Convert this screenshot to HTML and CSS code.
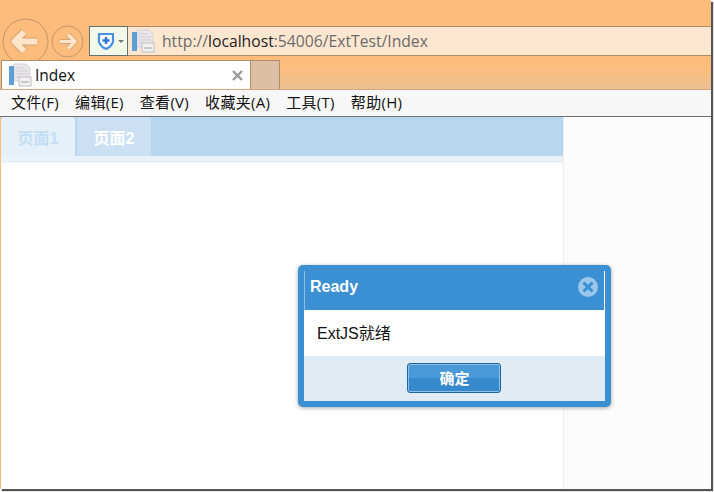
FILE: index.html
```html
<!DOCTYPE html>
<html lang="zh">
<head>
<meta charset="utf-8">
<title>Index</title>
<link rel="stylesheet" href="styles.css">
</head>
<body>
<div class="window">
  <header class="chrome">
    <div class="navrow">
      <svg class="back" width="47" height="47" viewBox="0 0 47 47">
        <circle cx="23.500" cy="23.500" r="22.500" fill="#fcbd7c" stroke="#c2946a"/>
        <path d="M22 14 L12.500 23.500 L22 33 M14 23.500 H35" fill="none" stroke="#b58d68" stroke-width="8" stroke-linejoin="round" stroke-linecap="butt" opacity=".55"/>
        <path d="M22 14 L12.500 23.500 L22 33 M14 23.500 H35" fill="none" stroke="#fde4cb" stroke-width="6" stroke-linejoin="round" stroke-linecap="butt"/>
      </svg>
      <svg class="forward" width="33" height="33" viewBox="0 0 33 33">
        <circle cx="16.500" cy="16.500" r="15.500" fill="#fcbd7c" stroke="#c2946a"/>
        <path d="M17 9.500 L24 16.500 L17 23.500 M23 16.500 H9" fill="none" stroke="#b58d68" stroke-width="5" stroke-linejoin="round" opacity=".55"/>
        <path d="M17 9.500 L24 16.500 L17 23.500 M23 16.500 H9" fill="none" stroke="#fde4cb" stroke-width="3.200" stroke-linejoin="round"/>
      </svg>
      <div class="address">
        <div class="shield">
          <svg width="18" height="18" viewBox="0 0 18 18">
            <path d="M2 2 H16 V10 Q14 15 9 17 Q4 15 2 10 Z" fill="#fff" stroke="#4a90e2" stroke-width="2.200" stroke-linejoin="round"/>
            <path d="M9 5 V12 M5.500 8.500 H12.500" stroke="#2a76d2" stroke-width="2.400"/>
          </svg>
          <span class="caret"></span>
        </div>
        <div class="url-box">
          <svg class="page-icon" width="24" height="24" viewBox="0 0 24 24">
            <path d="M6 1 H18 L22 5 V18 H6 Z" fill="#e8e6e8" stroke="#d4d2d4"/>
            <path d="M8 5 H16 M8 8 H20 M8 11 H20 M8 14 H12" stroke="#cfcdd0"/>
            <rect x="1" y="3" width="5" height="19" fill="#5b9fd6"/>
            <rect x="11" y="14" width="12" height="9" fill="#f2f2f2" stroke="#bdbdbd"/>
            <rect x="13" y="18" width="8" height="2" fill="#c8c8c8"/>
          </svg>
          <span class="url">http://<b class="host">localhost</b>:54006/ExtTest/Index</span>
        </div>
      </div>
    </div>
    <div class="tabrow">
      <div class="tab">
        <svg class="page-icon" width="24" height="24" viewBox="0 0 24 24">
          <path d="M6 1 H18 L22 5 V18 H6 Z" fill="#e8e6e8" stroke="#d4d2d4"/>
          <path d="M8 5 H16 M8 8 H20 M8 11 H20 M8 14 H12" stroke="#cfcdd0"/>
          <rect x="1" y="3" width="5" height="19" fill="#5b9fd6"/>
          <rect x="11" y="14" width="12" height="9" fill="#f2f2f2" stroke="#bdbdbd"/>
          <rect x="13" y="18" width="8" height="2" fill="#c8c8c8"/>
        </svg>
        <span class="tab-title">Index</span>
        <svg class="tab-close" width="11" height="11" viewBox="0 0 11 11">
          <path d="M1 1 L10 10 M10 1 L1 10" stroke="#9a9a9a" stroke-width="2.400"/>
        </svg>
      </div>
      <div class="newtab"></div>
    </div>
  </header>
  <nav class="menubar">
    <span>文件(F)</span><span>编辑(E)</span><span>查看(V)</span><span>收藏夹(A)</span><span>工具(T)</span><span>帮助(H)</span>
  </nav>
  <main class="content">
    <section class="app">
      <div class="apptabs">
        <div class="apptab apptab-active">页面1</div>
        <div class="apptab">页面2</div>
      </div>
      <div class="appstrip"></div>
      <div class="appbody"></div>
    </section>
    <aside class="blank"></aside>
  </main>
  <div class="dialog">
    <div class="dialog-head">
      <span class="dialog-title">Ready</span>
      <svg class="dialog-close" width="20" height="20" viewBox="0 0 20 20">
        <circle cx="10" cy="10" r="10" fill="#9cc6ea"/>
        <path d="M5.500 5.500 L14.500 14.500 M14.500 5.500 L5.500 14.500" stroke="#3b90d4" stroke-width="3"/>
      </svg>
    </div>
    <div class="dialog-body">ExtJS就绪</div>
    <div class="dialog-foot"><button class="ok">确定</button></div>
  </div>
</div>
</body>
</html>
```

FILE: styles.css
```css
* { box-sizing: border-box; }
html, body { margin: 0; padding: 0; background: #fff; }
body { width: 714px; height: 492px; overflow: hidden; font-family: "Liberation Sans", "Noto Sans CJK SC", sans-serif; }
.window { position: relative; width: 711px; height: 489px; display: flex; flex-direction: column; background: #fcbd7c; box-shadow: 2px 2px 1px #555; }
.chrome { height: 89px; flex: none; display: flex; flex-direction: column; background: linear-gradient(#fcbd7c 0, #fcbd7c 66px, #ebbf92 89px); }
.navrow { height: 60px; padding: 18px 0 0 2px; display: flex; align-items: flex-start; flex: none; }
.back { flex: none; }
.forward { flex: none; margin: 7px 0 0 2px; }
.address { flex: 1; height: 30px; margin: 8px 0 0 5px; display: flex; background: #fee7d0; border-top: 1px solid #ae8a67; border-bottom: 1px solid #ae8a67; }
.shield { width: 39px; height: 30px; margin-top: -1px; display: flex; align-items: center; padding-left: 7px; gap: 3px; background: #f3f9e8; border: 1px solid #66706e; }
.caret { width: 0; height: 0; border: 3px solid transparent; border-top: 3px solid #777; border-bottom: 0; }
.url-box { display: flex; align-items: center; padding-left: 3px; gap: 7px; }
.url { font-family: "Open Sans", sans-serif; font-size: 15.700px; color: #6b6b6b; white-space: nowrap; }
.host { font-weight: 400; color: #222; }
.tabrow { height: 29px; padding-left: 1px; display: flex; flex: none; }
.tab { width: 250px; height: 29px; padding: 0 7px 0 6px; display: flex; align-items: center; gap: 3px; background: #fff; border: 1px solid #b08c67; border-bottom: 0; }
.tab-title { flex: 1; font-family: "Open Sans", sans-serif; font-size: 15.500px; color: #111; }
.tab-close { flex: none; }
.newtab { width: 29px; height: 29px; background: #dcbfa5; border: 1px solid #b08c67; border-left: 0; border-bottom: 0; }
.menubar { height: 28px; flex: none; padding: 0 0 3px 11px; display: flex; align-items: center; gap: 16px; background: #f7f7f7; border-top: 1px solid #d9a67a; border-bottom: 1px solid #6f6f6f; font-family: "Open Sans", "Noto Sans CJK SC", sans-serif; font-size: 15px; letter-spacing: .3px; color: #111; }
.content { flex: 1; margin-left: 1px; display: flex; min-height: 0; background: #fff; }
.app { width: 562px; flex: none; display: flex; flex-direction: column; }
.apptabs { height: 39px; display: flex; gap: 2px; background: #b8d7ee; flex: none; }
.apptab { width: 74px; display: flex; align-items: center; justify-content: center; background: #cbe1f3; color: #fff; font-weight: 700; font-size: 16px; border-radius: 3px 3px 0 0; }
.apptab-active { background: #e5f0f9; color: #c3def3; }
.appstrip { height: 7px; background: #e8f2fa; flex: none; }
.appbody { flex: 1; background: #fff; }
.blank { flex: 1; background: #fcfcfc; border-left: 1px solid #eeeeee; }
.dialog { position: absolute; left: 298px; top: 265px; width: 313px; height: 142px; padding: 6px; background: #3b90d4; border-radius: 5px; box-shadow: 0 1px 4px rgba(0, 0, 0, .35); display: flex; flex-direction: column; }
.dialog-head { height: 39px; flex: none; padding: 0 6px 8px 5px; display: flex; align-items: center; justify-content: space-between; border-left: 1px solid #8dbde6; border-right: 1px solid #fff; font-weight: 700; font-size: 16px; color: #fff; }
.dialog-body { height: 46px; flex: none; padding: 0 0 2px 13px; display: flex; align-items: center; background: #fff; font-size: 16px; color: #111; }
.dialog-foot { flex: 1; padding: 0 2px 2px 0; display: flex; align-items: center; justify-content: center; background: #e1ebf4; }
.ok { width: 94px; height: 30px; padding: 0 0 0 2px; background: linear-gradient(#4a9ad9 50%, #3589cd 50%); border: 1px solid #1d64a3; border-radius: 3px; box-shadow: inset 0 0 0 1px #8fc0e8; color: #fff; font-family: inherit; font-weight: 700; font-size: 15px; }
```
